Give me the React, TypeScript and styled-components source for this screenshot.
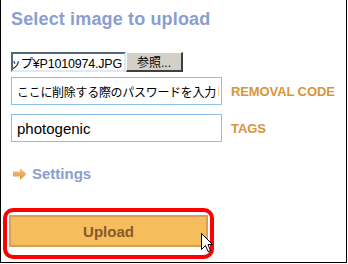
import styled, { createGlobalStyle } from "styled-components";

const GlobalStyle = createGlobalStyle`
  html, body {
    margin: 0;
    padding: 0;
    background: #ffffff;
  }
  body {
    font-family: "Liberation Sans", "Noto Sans CJK JP", sans-serif;
  }
`;

const Frame = styled.div`
  position: relative;
  box-sizing: border-box;
  width: 347px;
  height: 263px;
  border-left: 1px solid #000;
  border-right: 1px solid #000;
  border-bottom: 1px solid #000;
  padding: 8px 0 0 10px;
  overflow: hidden;
`;

const Title = styled.h1`
  margin: 0;
  font-size: 18px;
  line-height: 22px;
  font-weight: bold;
  color: #8a9ecf;
  letter-spacing: 0.15px;
`;

const FileRow = styled.div`
  display: flex;
  margin-top: 22px;
  height: 20px;
`;

const FilePath = styled.div`
  box-sizing: border-box;
  width: 115px;
  height: 20px;
  display: flex;
  align-items: center;
  justify-content: flex-end;
  padding-right: 2px;
  overflow: hidden;
  white-space: nowrap;
  border-top: 2px solid #56677a;
  border-left: 2px solid #56677a;
  border-right: 2px solid #dfe9f2;
  border-bottom: 2px solid #dfe9f2;
  font-size: 12.5px;
  letter-spacing: -0.2px;
  color: #000;
`;

const BrowseButton = styled.button`
  box-sizing: border-box;
  width: 57px;
  height: 20px;
  padding: 0;
  background: #d4d0c8;
  border-style: solid;
  border-width: 1px 2px 2px 1px;
  border-color: #ffffff #404040 #404040 #ffffff;
  font-family: "Liberation Sans", "Noto Sans CJK JP", sans-serif;
  font-size: 12px;
  color: #000;
`;

const FieldRow = styled.div<{ $top: number }>`
  display: flex;
  align-items: center;
  gap: 9px;
  margin-top: ${(p) => p.$top}px;
`;

const TextField = styled.input`
  box-sizing: border-box;
  width: 211px;
  height: 28px;
  margin: 0;
  padding: 0 2px 0 5px;
  border: 1px solid #8ec1e8;
  outline: none;
  background: #fff;
  color: #000;
  font-family: "Liberation Sans", "Noto Sans CJK JP", sans-serif;
  font-size: ${(p) => (p.lang === "ja" ? "12px" : "15px")};
  letter-spacing: ${(p) => (p.lang === "ja" ? "-0.3px" : "0")};
`;

const FieldLabel = styled.span`
  font-size: 13px;
  font-weight: bold;
  color: #d9943a;
  letter-spacing: -0.1px;
`;

const SettingsLink = styled.div`
  display: flex;
  align-items: center;
  gap: 5px;
  margin-top: 23px;
  margin-left: 2px;
  font-size: 15px;
  line-height: 18px;
  font-weight: bold;
  color: #8a9ecf;
`;

const Highlight = styled.div`
  box-sizing: border-box;
  width: 211px;
  height: 51px;
  margin: 25px 0 0 -8px;
  padding: 3px 2px 0 2px;
  border: 4px solid #ff0000;
  border-radius: 10px;
`;

const UploadButton = styled.button`
  box-sizing: border-box;
  display: block;
  width: 199px;
  height: 32px;
  margin: 0;
  padding: 0;
  background: #f6bd5d;
  border: 2px solid #d9a055;
  font-family: "Liberation Sans", sans-serif;
  font-size: 15px;
  font-weight: bold;
  color: #855a2c;
`;

const Cursor = styled.svg`
  position: absolute;
  left: 200px;
  top: 233px;
`;

const ArrowIcon = () => (
  <svg width="14" height="12" viewBox="0 0 14 12">
    <defs>
      <linearGradient id="arrowFill" x1="0" y1="0" x2="0" y2="1">
        <stop offset="0" stopColor="#f7c98a" />
        <stop offset="1" stopColor="#e38d35" />
      </linearGradient>
    </defs>
    <polygon
      points="0,3.5 7,3.5 7,0 13.5,6 7,12 7,8.5 0,8.5"
      fill="url(#arrowFill)"
    />
  </svg>
);

export default function App() {
  return (
    <>
      <GlobalStyle />
      <Frame>
        <Title>Select image to upload</Title>
        <FileRow>
          <FilePath>C:¥Documents and Settings¥デスクトップ¥P1010974.JPG</FilePath>
          <BrowseButton>参照...</BrowseButton>
        </FileRow>
        <FieldRow $top={5}>
          <TextField lang="ja" defaultValue="ここに削除する際のパスワードを入力してください" readOnly />
          <FieldLabel>REMOVAL CODE</FieldLabel>
        </FieldRow>
        <FieldRow $top={9}>
          <TextField defaultValue="photogenic" readOnly />
          <FieldLabel>TAGS</FieldLabel>
        </FieldRow>
        <SettingsLink>
          <ArrowIcon />
          Settings
        </SettingsLink>
        <Highlight>
          <UploadButton>Upload</UploadButton>
        </Highlight>
        <Cursor width="12" height="20" viewBox="0 0 12 20">
          <path
            d="M0.5 0.5 L0.5 16.5 L4.5 12.5 L7 18.5 L9.5 17.5 L7 11.5 L11.5 11.5 Z"
            fill="#fff"
            stroke="#000"
            strokeWidth="1"
          />
        </Cursor>
      </Frame>
    </>
  );
}
